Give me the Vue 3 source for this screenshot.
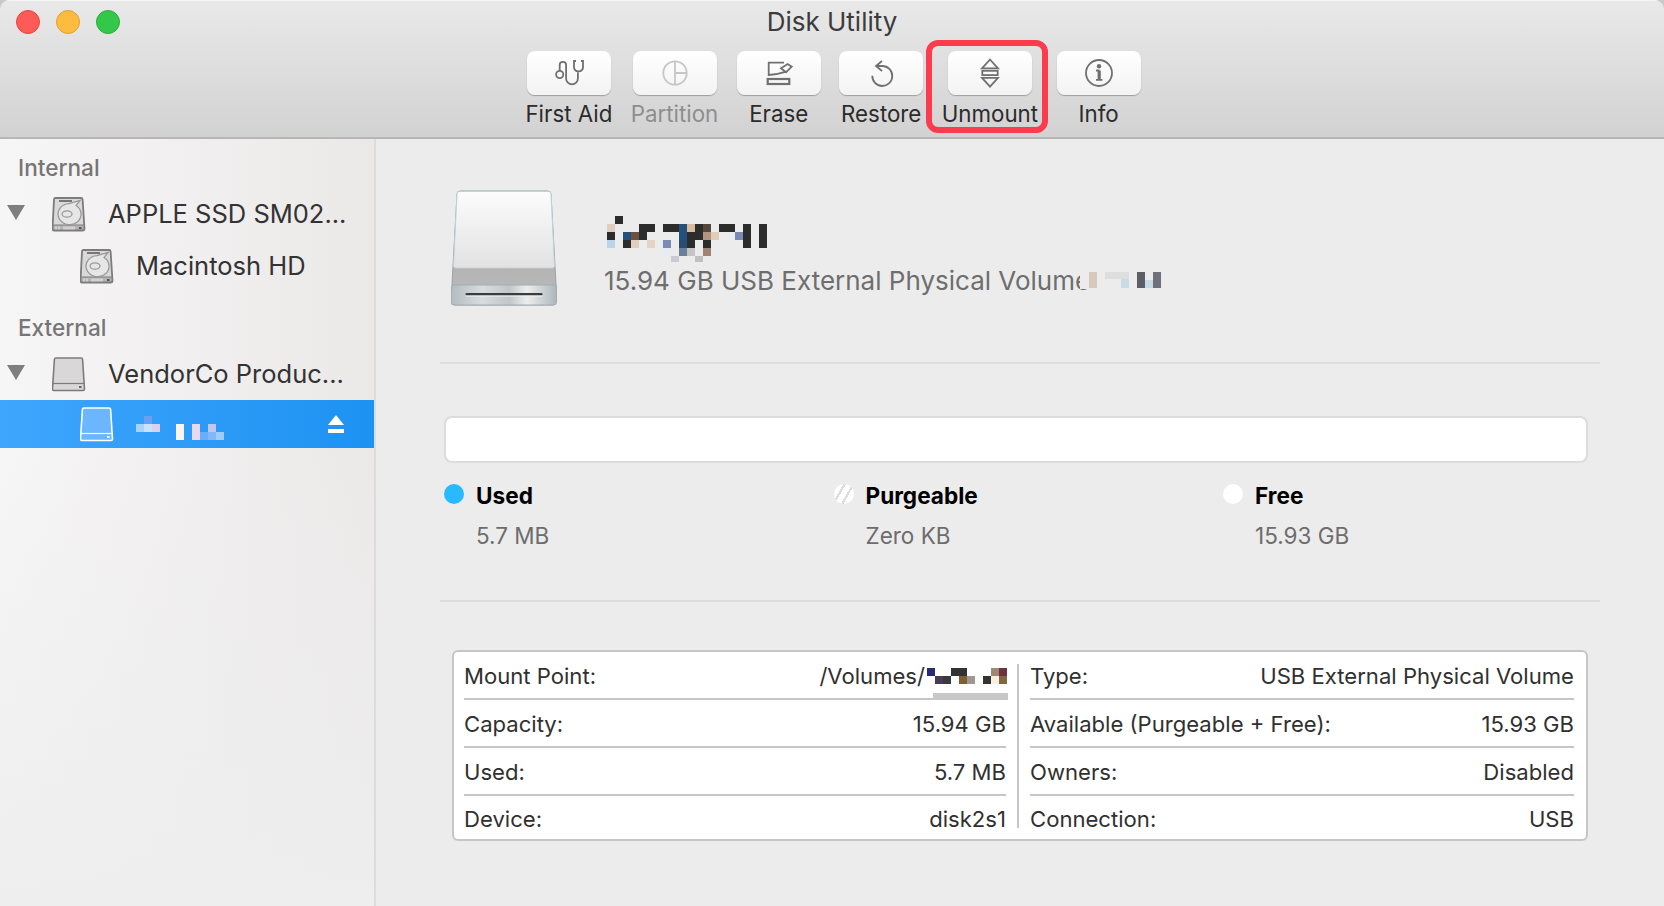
<template>
  <div class="window">
    <header class="titlebar">
      <div class="title-row">
        <div class="lights">
          <span class="light red"></span>
          <span class="light yellow"></span>
          <span class="light green"></span>
        </div>
        <div class="title">Disk Utility</div>
      </div>
      <div class="toolbar">
        <div
          v-for="tool in tools"
          :key="tool.label"
          class="tool"
          :class="{ disabled: tool.disabled, marked: tool.label === 'Unmount' }"
        >
          <div class="tool-btn">
            <svg width="32" height="32" viewBox="0 0 32 32" fill="none" :stroke="tool.disabled ? '#c6c6c6' : '#707070'" stroke-width="1.8">
              <template v-if="tool.label === 'First Aid'">
                <circle cx="6.7" cy="17.5" r="3.6" />
                <path d="M6.7 13.9V8a3.2 3.2 0 0 1 6.400 0v13.500a5.900 5.900 0 0 0 11.800 0v-6.200" />
                <path d="M23 4h-2v6.700a4.600 4.600 0 0 0 9 0V4h-2" />
              </template>
              <template v-else-if="tool.label === 'Partition'">
                <circle cx="16" cy="16" r="11.7" />
                <path d="M16 4.300v23.400M16 16h11.700" />
              </template>
              <template v-else-if="tool.label === 'Erase'">
                <path d="M21 5.700H5.700V18c6-.4 12-1.400 17.500-3.300" />
                <path d="M18 11.300 24.700 7l4 2.700-5.700 5.600z" />
                <rect x="4.700" y="22" width="21.600" height="5" stroke-width="2.200" />
              </template>
              <template v-else-if="tool.label === 'Restore'">
                <path d="M11 9h6.300A10 10 0 1 1 7.300 18.700" />
                <path d="M17 4l-6 5 6 5" />
              </template>
              <template v-else-if="tool.label === 'Unmount'">
                <path d="M16 2.500 24 11.300H8z" />
                <rect x="8.300" y="13.800" width="15.400" height="4.300" />
                <path d="M8 20.800h16l-8 8.900z" />
              </template>
              <template v-else>
                <circle cx="16" cy="16" r="13" />
                <circle cx="16" cy="9.300" r="2.200" fill="#707070" stroke="none" />
                <path d="M16.200 13.500v9" stroke-width="3.200" />
                <path d="M13 13.500h3.500M13 22.800h6.400" stroke-width="1.800" />
              </template>
            </svg>
          </div>
          <div class="tool-label">{{ tool.label }}</div>
        </div>
      </div>
    </header>

    <div class="content">
      <aside class="sidebar">
        <section v-for="group in groups" :key="group.name" class="side-group">
          <div class="side-heading">{{ group.name }}</div>
          <div
            v-for="row in group.rows"
            :key="row.key"
            class="side-row"
            :class="{ child: row.child, selected: row.selected }"
          >
            <svg v-if="!row.child" class="arrow" width="18" height="15" viewBox="0 0 18 15"><path d="M0 0h18L9 15z" fill="#7f7f7f" /></svg>

            <svg v-if="row.kind === 'hdd'" class="side-icon" width="34" height="35" viewBox="0 0 34 35">
              <path d="M3.500 1H29q1.500 0 1.600 1.500L32.500 32q0 1.500-1.500 1.500H2q-1.500 0-1.500-1.500L2 2.500Q2 1 3.500 1z" fill="#d9d9d9" stroke="#7c7c7c" stroke-width="1.800" />
              <path d="M1 28h31v5H1z" fill="#b4b4b4" stroke="#7c7c7c" stroke-width="1" />
              <path d="M4 29.500v3M7 29.500v3M12 29.500v3M14 29.500v3M16 29.500v3M18 29.500v3M20 29.500v3M22 29.500v3" stroke="#eee" stroke-width="1" />
              <rect x="27" y="30" width="2.500" height="2" fill="#555" />
              <path d="M7 3h13v2H7z" fill="#777" />
              <path d="M24 8.500a11.500 10.500 0 1 1-7-1.800L28 3.500z" fill="#e6e6e6" stroke="#999" stroke-width="1.300" />
              <ellipse cx="15" cy="17" rx="5" ry="3.200" fill="none" stroke="#999" stroke-width="1.300" />
            </svg>
            <svg v-else class="side-icon" width="34" height="35" viewBox="0 0 34 35">
              <path
                d="M4 1h25q1.500 0 1.600 1.500L32.500 32q0 1.500-1.500 1.500H2q-1.500 0-1.500-1.500L2.400 2.500Q2.500 1 4 1z"
                :fill="row.selected ? '#6cb6ff' : '#d9d7d7'"
                :stroke="row.selected ? '#fff' : '#7c7c7c'"
                stroke-width="1.600"
              />
              <path d="M1 26.500h31" fill="none" :stroke="row.selected ? '#fff' : '#7c7c7c'" stroke-width="1.200" />
              <rect x="27" y="29" width="2.500" height="2" :fill="row.selected ? '#fff' : '#666'" />
            </svg>

            <span v-if="row.label" class="side-label">{{ row.label }}</span>
            <svg v-else class="side-mosaic" width="88" height="24" viewBox="0 0 88 24">
              <rect v-for="(c, i) in sideCells" :key="i" :x="c[0]" :y="c[1]" :width="c[2]" :height="c[3]" :fill="c[4]" />
            </svg>
            <svg v-if="row.selected" class="eject" width="16" height="18" viewBox="0 0 16 18"><path d="M8 0l8 10H0zM0 14h16v4H0z" fill="#fff" /></svg>
          </div>
        </section>
      </aside>

      <main class="main">
        <div class="volume-head">
          <svg class="volume-icon" width="106" height="116" viewBox="0 0 106 116">
            <defs>
              <linearGradient id="faceGrad" x1="0" y1="0" x2="0" y2="1">
                <stop offset="0" stop-color="#fcfcfc" />
                <stop offset="1" stop-color="#e2e2e2" />
              </linearGradient>
              <linearGradient id="slopeGrad" x1="0" y1="0" x2="0" y2="1">
                <stop offset="0" stop-color="#a8a8a8" />
                <stop offset="1" stop-color="#bababa" />
              </linearGradient>
              <linearGradient id="frontGrad" x1="0" y1="0" x2="1" y2="0">
                <stop offset="0" stop-color="#b4bcc0" />
                <stop offset=".3" stop-color="#d8dcde" />
                <stop offset=".55" stop-color="#c2c6c8" />
                <stop offset=".72" stop-color="#eceeee" />
                <stop offset="1" stop-color="#aeb6ba" />
              </linearGradient>
            </defs>
            <path d="M9 1h88q3 0 3 3l5 90v18q0 3-3 3H4q-3 0-3-3V94L6 4q0-3 3-3z" fill="url(#slopeGrad)" stroke="#9aa0a4" stroke-width="1" />
            <path d="M8 1.500h90q2 0 2 2.500l3.500 72q0 2-2 2H4.500q-2 0-2-2L6 4q0-2.500 2-2.500z" fill="url(#faceGrad)" stroke="#c4d0d6" stroke-width="1" />
            <path d="M.500 97q0-2 2-2h101q2 0 2 2v15q0 3-3 3H3q-3 0-3-3z" fill="url(#frontGrad)" stroke="#a4acb0" stroke-width="1" />
            <rect x="14.500" y="103" width="77" height="2.500" rx="1" fill="#3c3c3c" />
            <rect x="14.500" y="105.500" width="77" height="1" fill="#f4f4f4" />
          </svg>
          <div class="volume-text">
            <svg class="name-mosaic" width="164" height="46" viewBox="0 0 164 46">
              <rect v-for="(c, i) in nameCells" :key="i" :x="c[0] * 8" :y="c[1] * 8" width="8" height="8" :fill="c[2]" />
            </svg>
            <div class="volume-sub">
              15.94 GB USB External Physical Volume
              <svg class="sub-mosaic" width="88" height="18" viewBox="0 0 88 18">
                <rect width="88" height="18" fill="#ececec" />
                <rect x="9" y="1" width="8" height="16" fill="#d8c8bc" />
                <rect x="25" y="1" width="24" height="7" fill="#dedede" />
                <rect x="41" y="8" width="8" height="9" fill="#c8dce8" />
                <rect x="57" y="1" width="8" height="16" fill="#5e5e68" />
                <rect x="65" y="9" width="8" height="8" fill="#c8dce8" />
                <rect x="73" y="1" width="8" height="16" fill="#70707a" />
              </svg>
            </div>
          </div>
        </div>

        <div class="usage">
          <div class="usage-bar"></div>
          <div class="legend">
            <div v-for="item in legend" :key="item.label" class="legend-item">
              <span class="dot" :class="item.cls"></span>
              <div>
                <div class="legend-label">{{ item.label }}</div>
                <div class="legend-value">{{ item.value }}</div>
              </div>
            </div>
          </div>
        </div>

        <div class="info-table">
          <div class="info-col">
            <div v-for="row in leftRows" :key="row[0]" class="info-row">
              <span>{{ row[0] }}</span>
              <span class="info-value">
                {{ row[1] }}
                <svg v-if="row[0] === 'Mount Point:'" class="mount-mosaic" width="81" height="16" viewBox="0 0 81 16">
                  <rect v-for="(c, i) in mountCells" :key="i" :x="c[0] * 8" :y="c[1] * 8" width="8" height="8" :fill="c[2]" />
                </svg>
              </span>
              <span v-if="row[0] === 'Mount Point:'" class="mount-strip"></span>
            </div>
          </div>
          <div class="info-divider"></div>
          <div class="info-col">
            <div v-for="row in rightRows" :key="row[0]" class="info-row">
              <span>{{ row[0] }}</span>
              <span class="info-value">{{ row[1] }}</span>
            </div>
          </div>
        </div>
      </main>
    </div>
  </div>
</template>

<script setup>
const tools = [
  { label: 'First Aid' },
  { label: 'Partition', disabled: true },
  { label: 'Erase' },
  { label: 'Restore' },
  { label: 'Unmount' },
  { label: 'Info' }
]

const groups = [
  {
    name: 'Internal',
    rows: [
      { key: 'ssd', label: 'APPLE SSD SM02...', kind: 'hdd' },
      { key: 'mac', label: 'Macintosh HD', kind: 'hdd', child: true }
    ]
  },
  {
    name: 'External',
    rows: [
      { key: 'vendor', label: 'VendorCo Produc...', kind: 'ext' },
      { key: 'usb', label: '', kind: 'ext', child: true, selected: true }
    ]
  }
]

const legend = [
  { label: 'Used', value: '5.7 MB', cls: 'used' },
  { label: 'Purgeable', value: 'Zero KB', cls: 'purgeable' },
  { label: 'Free', value: '15.93 GB', cls: 'free' }
]

const leftRows = [
  ['Mount Point:', '/Volumes/'],
  ['Capacity:', '15.94 GB'],
  ['Used:', '5.7 MB'],
  ['Device:', 'disk2s1']
]

const rightRows = [
  ['Type:', 'USB External Physical Volume'],
  ['Available (Purgeable + Free):', '15.93 GB'],
  ['Owners:', 'Disabled'],
  ['Connection:', 'USB']
]

// blurred-out volume name, [col, row, colour]
const nameCells = [
  [1, 0, '#2c2c2c'],
  [0, 1, '#e0cfc0'], [4, 1, '#2c2c2c'], [5, 1, '#2c2c2c'], [7, 1, '#2c2c2c'], [8, 1, '#2c2c2c'],
  [9, 1, '#24507c'], [10, 1, '#d8bc9c'], [11, 1, '#2c2c2c'], [12, 1, '#54483c'], [14, 1, '#2c2c2c'],
  [15, 1, '#2c2c2c'], [17, 1, '#2c2c2c'], [19, 1, '#2c2c2c'],
  [0, 2, '#2c2c2c'], [2, 2, '#24507c'], [3, 2, '#6c5040'], [4, 2, '#2c2c2c'], [9, 2, '#24507c'],
  [10, 2, '#2c2c2c'], [11, 2, '#2c2c2c'], [12, 2, '#b09484'], [13, 2, '#e0cdb8'], [16, 2, '#7a8ab4'],
  [17, 2, '#2c2c2c'], [19, 2, '#2c2c2c'],
  [0, 3, '#b8d4e8'], [2, 3, '#2c2c2c'], [3, 3, '#e0cfc0'], [5, 3, '#e4d4c4'], [7, 3, '#7a8ab4'],
  [9, 3, '#2a4c74'], [10, 3, '#2c2c2c'], [12, 3, '#2c2c2c'], [17, 3, '#2c2c2c'], [19, 3, '#2c2c2c'],
  [7, 4, '#e8ecf0'], [9, 4, '#6a8098'], [10, 4, '#c4c4c4'], [12, 4, '#a08474'],
  [8, 5, '#c8ccd2'], [11, 5, '#c0c0c0']
]

const mountCells = [
  [0, 0, '#2a2a70'], [3, 0, '#333333'], [4, 0, '#333333'], [8, 0, '#a08870'], [9, 0, '#703040'],
  [1, 1, '#4a3a5a'], [2, 1, '#3a3a3a'], [4, 1, '#806030'], [5, 1, '#a09890'], [7, 1, '#333333'],
  [8, 1, '#f8efe0'], [9, 1, '#806840']
]

// x, y, w, h, colour
const sideCells = [
  [8, 0, 8, 8, '#6aa0f0'],
  [0, 8, 8, 8, '#a8d4fc'], [8, 8, 8, 8, '#c8e4fc'], [16, 8, 8, 8, '#dcd0f0'],
  [40, 8, 8, 16, '#fdf4f0'], [56, 8, 8, 16, '#e8d8f0'], [64, 16, 8, 8, '#6aaef8'],
  [72, 8, 8, 8, '#c0c8f0'], [72, 16, 8, 8, '#80b8f8'], [80, 16, 8, 8, '#a0ccf8']
]
</script>

<style scoped>
.window {
  width: 1664px;
  height: 906px;
  display: flex;
  flex-direction: column;
  overflow: hidden;
  border-radius: 10px 10px 0 0;
  background: #ececec;
  font-family: Inter, "Liberation Sans", sans-serif;
  color: #2b2b2b;
}

.titlebar {
  height: 139px;
  box-sizing: border-box;
  flex-shrink: 0;
  background: linear-gradient(180deg, #e9e9e9, #d2d2d2);
  border-bottom: 2px solid #b6b6b6;
  box-shadow: inset 0 1px 0 #f6f6f6;
}

.title-row {
  height: 44px;
  display: grid;
  grid-template-columns: 1fr auto 1fr;
  align-items: center;
}

.lights {
  display: flex;
  gap: 16px;
  padding-left: 16px;
}

.light {
  width: 24px;
  height: 24px;
  box-sizing: border-box;
  border-radius: 50%;
  border: 1px solid transparent;
}

.red { background: #fc5b57; border-color: #e5453f; }
.yellow { background: #fdbc40; border-color: #e0a02c; }
.green { background: #34c84a; border-color: #2aad3c; }

.title {
  font-size: 26px;
  line-height: 44px;
  color: #3c3c3c;
}

.toolbar {
  display: flex;
  justify-content: center;
  gap: 18.5px;
  margin-top: 7px;
  padding-left: 2px;
}

.tool {
  min-width: 84px;
  display: flex;
  flex-direction: column;
  align-items: center;
  position: relative;
}

.tool.marked::after {
  content: "";
  position: absolute;
  left: -16px;
  right: -10px;
  top: -11px;
  height: 93px;
  box-sizing: border-box;
  border: 6px solid #fb3c4e;
  border-radius: 12px;
}

.tool-btn {
  width: 84px;
  height: 44px;
  display: flex;
  align-items: center;
  justify-content: center;
  border-radius: 8px;
  background: linear-gradient(180deg, #ffffff, #f3f3f3);
  box-shadow: 0 1px 1px rgba(0, 0, 0, 0.28);
}

.tool-label {
  margin-top: 4px;
  font-size: 22.3px;
  line-height: 30px;
  white-space: nowrap;
}

.disabled .tool-label {
  color: #8e8e8e;
}

.content {
  flex: 1;
  display: flex;
  min-height: 0;
}

.sidebar {
  width: 376px;
  box-sizing: border-box;
  flex-shrink: 0;
  padding-top: 13px;
  border-right: 2px solid #dcdcdc;
  background:
    linear-gradient(180deg, rgba(238, 238, 238, 0) 40%, #eeeeee 100%),
    linear-gradient(90deg, #f7f6f6, #ebe8e8);
}

.side-group + .side-group {
  margin-top: 22px;
}

.side-heading {
  height: 32px;
  margin-bottom: 6px;
  padding-left: 18px;
  font-size: 22.6px;
  line-height: 32px;
  font-weight: 500;
  color: #777575;
}

.side-row {
  height: 48px;
  display: flex;
  align-items: center;
  padding-left: 7px;
}

.side-row + .side-row {
  margin-top: 4px;
}

.side-row.selected {
  margin-top: 2px;
  background: linear-gradient(90deg, #3fa6fd, #1d92f2);
}

.arrow {
  margin-right: 27px;
  margin-top: -3px;
}

.child .side-icon {
  margin-left: 73px;
}

.side-label {
  margin-left: 22px;
  margin-top: -2px;
  font-size: 25.5px;
  white-space: nowrap;
  color: #333;
}

.side-mosaic {
  margin-left: 22px;
  margin-top: 8px;
}

.eject {
  margin-left: auto;
  margin-right: 30px;
}

.main {
  flex: 1;
  min-width: 0;
  padding: 0 64px;
}

.volume-head {
  height: 225px;
  box-sizing: border-box;
  display: flex;
  align-items: flex-start;
  padding: 51px 0 0 11px;
  border-bottom: 2px solid #dcdcdc;
}

.volume-icon {
  flex-shrink: 0;
}

.volume-text {
  margin-left: 47px;
  margin-top: 26px;
}

.name-mosaic {
  display: block;
  margin-left: 3px;
  margin-bottom: 2px;
}

.volume-sub {
  position: relative;
  font-size: 26px;
  line-height: 34px;
  color: #6e6e6e;
  white-space: nowrap;
}

.sub-mosaic {
  position: absolute;
  left: 476px;
  top: 7px;
}

.usage {
  height: 238px;
  box-sizing: border-box;
  padding-top: 52px;
  border-bottom: 2px solid #dcdcdc;
}

.usage-bar {
  height: 47px;
  box-sizing: border-box;
  margin: 0 12px 0 4px;
  border: 2px solid #dcdcdc;
  border-radius: 8px;
  background: #fff;
}

.legend {
  display: grid;
  grid-template-columns: repeat(3, 389.5px);
  margin: 18px 0 0 4px;
}

.legend-item {
  display: flex;
  gap: 12px;
}

.dot {
  width: 20px;
  height: 20px;
  margin-top: 3px;
  border-radius: 50%;
  flex-shrink: 0;
}

.dot.used { background: #28b9ff; }
.dot.free { background: #fff; }
.dot.purgeable {
  background: linear-gradient(120deg, #fff 30%, #dcdcdc 30% 38%, #fff 38% 58%, #dcdcdc 58% 66%, #fff 66%);
}

.legend-label {
  font-size: 22.6px;
  line-height: 30px;
  font-weight: 700;
  color: #000;
}

.legend-value {
  margin-top: 10px;
  font-size: 22.5px;
  line-height: 30px;
  color: #6e6c6c;
}

.info-table {
  height: 191px;
  box-sizing: border-box;
  display: grid;
  grid-template-columns: 542px 2px 544px;
  column-gap: 11px;
  margin: 48px 12px 0 12px;
  padding-left: 10px;
  border: 2px solid #c6c6c6;
  border-radius: 6px;
  background: #fff;
}

.info-row {
  position: relative;
  height: 48px;
  box-sizing: border-box;
  padding-top: 1px;
  display: flex;
  justify-content: space-between;
  align-items: center;
  border-bottom: 2px solid #c6c6c6;
  font-size: 22.1px;
  white-space: nowrap;
  color: #303030;
}

.info-row:last-child {
  height: 37px;
  padding-top: 10px;
  align-items: flex-start;
  line-height: 27px;
  border-bottom: 0;
}

.info-value {
  display: flex;
  align-items: center;
}

.mount-mosaic {
  margin-left: 2px;
  margin-right: -2px;
}

.mount-strip {
  position: absolute;
  right: -2px;
  bottom: -2px;
  width: 75px;
  height: 7px;
  background: #c8c8c8;
}

.info-divider {
  height: 164px;
  margin-top: 12px;
  background: #c6c6c6;
}
</style>

<style>
html,
body {
  background: #c9c9c9;
  overflow: hidden;
}
</style>
